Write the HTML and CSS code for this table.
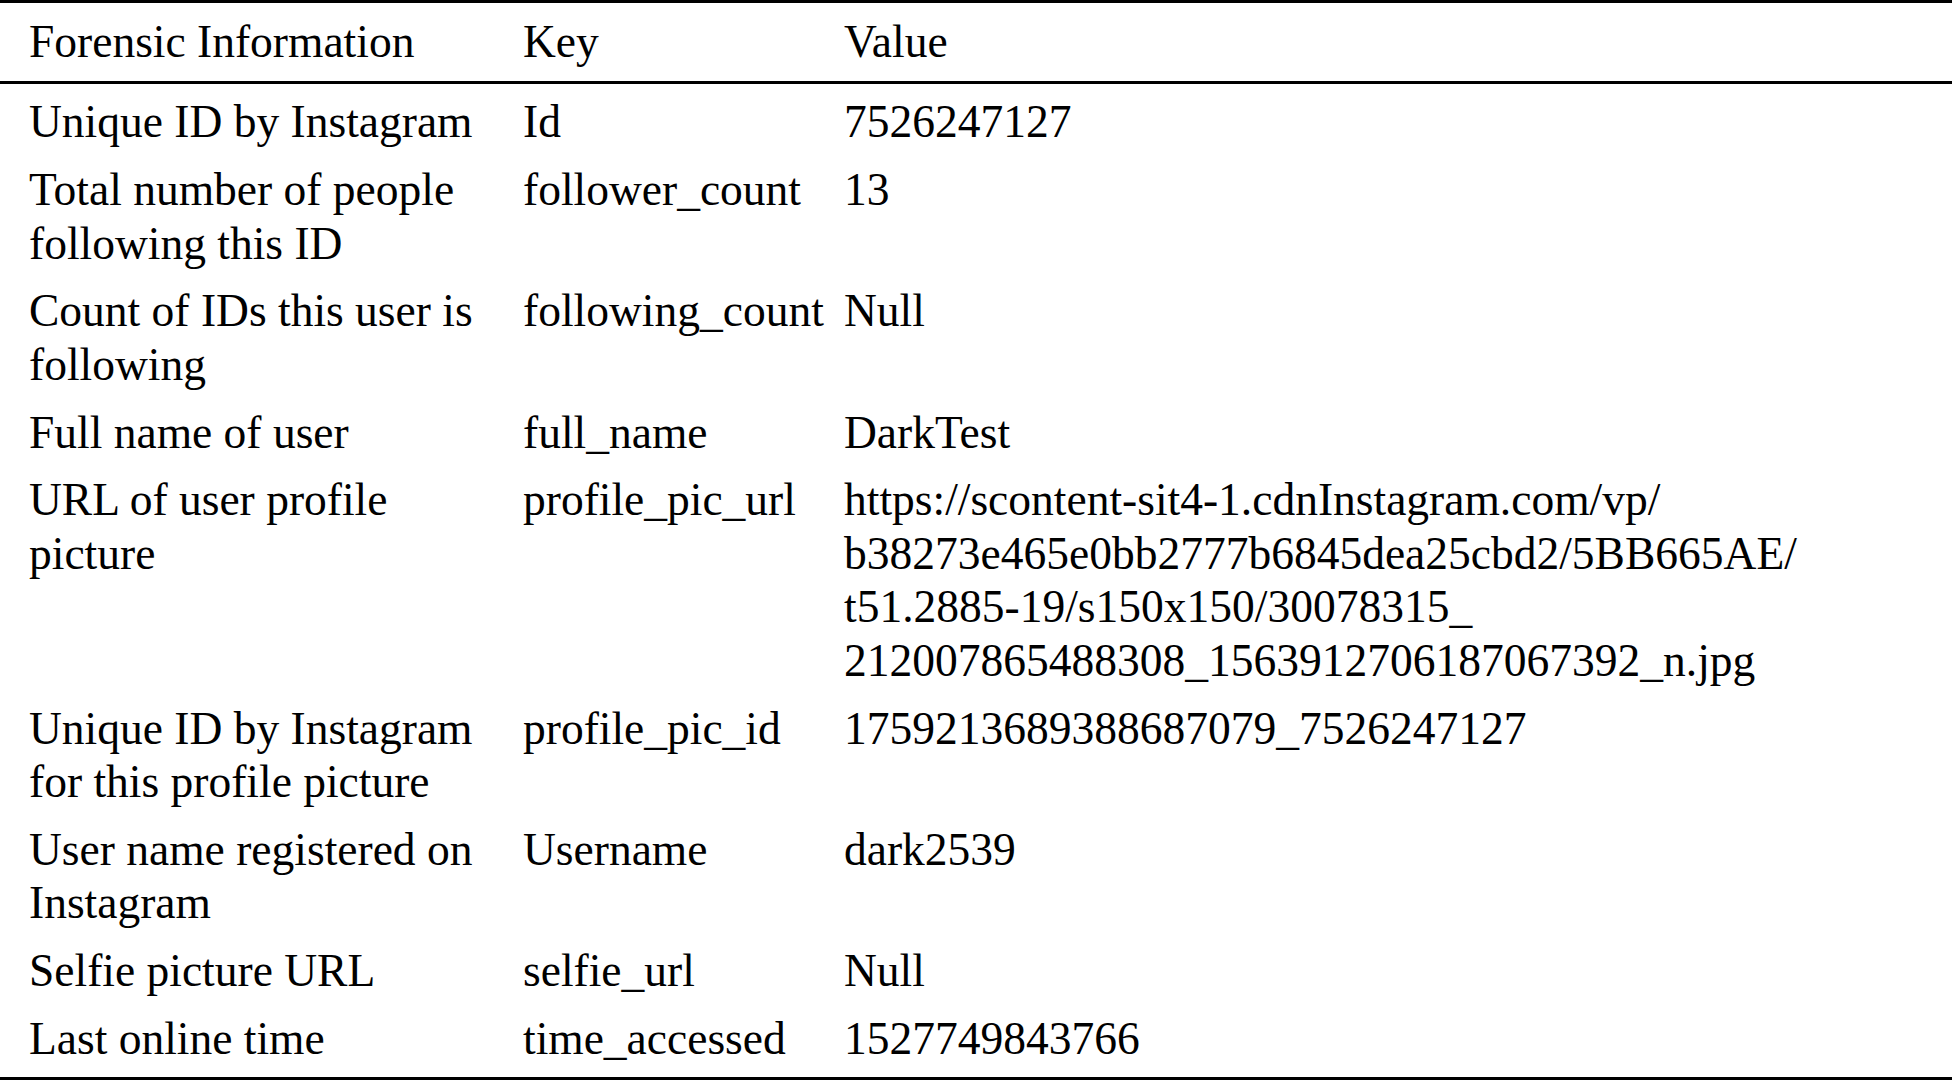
FILE: index.html
```html
<!DOCTYPE html>
<html lang="en">
<head>
<meta charset="utf-8">
<title>Forensic Information</title>
<link rel="stylesheet" href="styles.css">
</head>
<body>
<table class="forensic">
  <colgroup>
    <col class="col-info">
    <col class="col-key">
    <col class="col-value">
  </colgroup>
  <thead>
    <tr>
      <th class="c1">Forensic Information</th>
      <th class="c2">Key</th>
      <th class="c3">Value</th>
    </tr>
  </thead>
  <tbody>
    <tr class="first">
      <td class="c1">Unique ID by Instagram</td>
      <td class="c2">Id</td>
      <td class="c3">7526247127</td>
    </tr>
    <tr>
      <td class="c1">Total number of people following this ID</td>
      <td class="c2">follower_count</td>
      <td class="c3">13</td>
    </tr>
    <tr>
      <td class="c1">Count of IDs this user is following</td>
      <td class="c2">following_count</td>
      <td class="c3">Null</td>
    </tr>
    <tr>
      <td class="c1">Full name of user</td>
      <td class="c2">full_name</td>
      <td class="c3">DarkTest</td>
    </tr>
    <tr>
      <td class="c1">URL of user profile picture</td>
      <td class="c2">profile_pic_url</td>
      <td class="c3">https://scontent-sit4-1.cdnInstagram.com/vp/<br>b38273e465e0bb2777b6845dea25cbd2/5BB665AE/<br>t51.2885-19/s150x150/30078315_<br>212007865488308_1563912706187067392_n.jpg</td>
    </tr>
    <tr>
      <td class="c1">Unique ID by Instagram for this profile picture</td>
      <td class="c2">profile_pic_id</td>
      <td class="c3">1759213689388687079_7526247127</td>
    </tr>
    <tr>
      <td class="c1">User name registered on Instagram</td>
      <td class="c2">Username</td>
      <td class="c3">dark2539</td>
    </tr>
    <tr>
      <td class="c1">Selfie picture URL</td>
      <td class="c2">selfie_url</td>
      <td class="c3">Null</td>
    </tr>
    <tr class="last">
      <td class="c1">Last online time</td>
      <td class="c2">time_accessed</td>
      <td class="c3">1527749843766</td>
    </tr>
  </tbody>
</table>
</body>
</html>
```
FILE: styles.css
```css
html, body {
  margin: 0;
  padding: 0;
  background: #ffffff;
}

body {
  font-family: "Liberation Serif", "Times New Roman", serif;
  font-size: 45.5px;
  line-height: 53.5px;
  color: #000000;
}

.forensic {
  width: 100%;
  table-layout: fixed;
  border-collapse: separate;
  border-spacing: 0;
}

.col-info { width: 512px; }
.col-key { width: 321px; }

.forensic th,
.forensic td {
  font-weight: normal;
  text-align: left;
  vertical-align: top;
  padding-top: 7.125px;
  padding-bottom: 7.125px;
}

.forensic .c1 { padding-left: 29px; padding-right: 11px; }
.forensic .c2 { padding-left: 11px; padding-right: 0; white-space: nowrap; }
.forensic .c3 { padding-left: 11px; padding-right: 0; white-space: nowrap; }

.forensic thead th {
  border-top: 3px solid #000;
  border-bottom: 3px solid #000;
  padding-top: 11.75px;
  padding-bottom: 12.75px;
}

.forensic tr.first td { padding-top: 11.25px; }

.forensic tr.last td {
  padding-bottom: 11.75px;
  border-bottom: 3px solid #000;
}
```
